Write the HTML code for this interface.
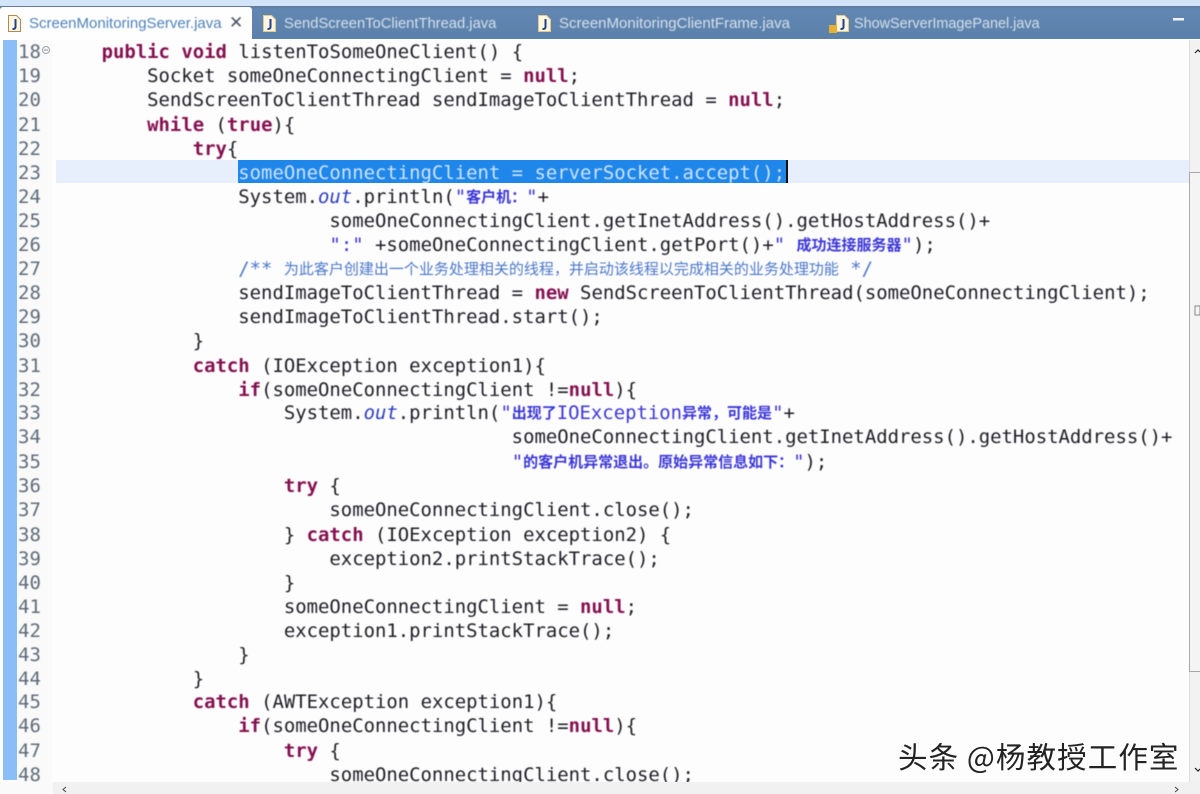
<!DOCTYPE html>
<html><head><meta charset="utf-8">
<style>
html,body{margin:0;padding:0;background:#fefdfe;}
#r{position:relative;width:1200px;height:794px;overflow:hidden;background:#fefdfe;}
#r div{position:absolute;}
.l{left:56px;height:24px;font:18.93px/24px "DejaVu Sans Mono","Liberation Mono","Noto Sans CJK SC",monospace;white-space:pre;color:#1c1c24;filter:blur(.45px);}
.n{left:18px;height:24px;font:19px/24px "DejaVu Sans Mono","Liberation Mono",monospace;color:#5f6b78;filter:blur(.45px);white-space:pre;}
b{color:#85104f;font-weight:bold;}
i{color:#2a3bc0;font-style:italic;}
.s{color:#3a36d8;}
.c{font:bold 15px/24px "Noto Sans CJK SC",sans-serif;color:#3a36d8;display:inline-block;vertical-align:top;}
.m{color:#4a78c8;}
.m .c{font-weight:normal;color:#4a78c8;}
.t{font:15px/20px "Liberation Sans",sans-serif;color:#d5e0ec;top:14px;white-space:pre;filter:blur(.4px);}
</style></head><body><div id="r">
<div style="left:0;top:0;width:1200px;height:6px;background:#d2e5f8"></div>
<div style="left:0;top:6px;width:1200px;height:33px;background:linear-gradient(#64799a 0,#6287b2 3px,#5b80aa 100%)"></div>
<div style="left:0;top:7px;width:252px;height:32px;background:#fefeff;border-radius:3px 3px 0 0"></div>
<div class="t" style="left:29px;color:#4f82b8;">ScreenMonitoringServer.java</div>
<div class="t" style="left:229px;top:13px;color:#4a5560;font-size:17px;">✕</div>
<div class="t" style="left:284px;font-size:14.75px">SendScreenToClientThread.java</div>
<div class="t" style="left:559px;font-size:15px">ScreenMonitoringClientFrame.java</div>
<div class="t" style="left:854px;font-size:14.4px">ShowServerImagePanel.java</div>
<svg style="position:absolute;left:0;top:0" width="1200" height="60">
<g fill="#fdf6e0" stroke="#b08a50" stroke-width="1">
<path d="M8.5 15.5h8l4 4v12h-12z"/><path d="M263.5 15.5h8l4 4v12h-12z" stroke="#e0c890"/><path d="M538.5 15.5h8l4 4v12h-12z" stroke="#e0c890"/><path d="M836.5 15.5h8l4 4v12h-12z" stroke="#e0c890"/></g>
<g fill="none" stroke="#25408a" stroke-width="2"><path d="M15.5 19v8q0 2-3 2"/><path d="M270.5 19v8q0 2-3 2"/><path d="M545.5 19v8q0 2-3 2"/><path d="M843.5 19v8q0 2-3 2"/></g>
<rect x="829" y="25" width="8" height="8" fill="#e8b030"/>
<rect x="1173" y="18" width="11" height="2.5" fill="#f0f4f8"/>
</svg>
<div style="left:3px;top:40px;width:14px;height:740px;background:#8bbdf6"></div>
<div style="left:17px;top:40px;width:35px;height:742px;background:#fafafb"></div>
<div style="left:56px;top:160px;width:1133px;height:23px;background:#e6effb"></div>
<div style="left:238px;top:160px;width:549px;height:23px;background:#1f86ea"></div>
<div style="left:786px;top:160px;width:2px;height:23px;background:#111"></div>
<div style="left:1189px;top:40px;width:11px;height:754px;background:#f2f2f2;border-left:1px solid #dcdcdc;box-sizing:border-box"></div>
<div style="left:1189px;top:172px;width:11px;height:500px;background:#f4f4f4;border:1px solid #a8a8a8;border-right:0;box-sizing:border-box"></div>
<div style="left:0;top:782px;width:1200px;height:12px;background:#f1f1f1"></div>
<div style="left:0;top:782px;width:53px;height:12px;background:#fafafa"></div>
<div class="n" style="top:40px">18</div><div class="n" style="top:64px">19</div><div class="n" style="top:88px">20</div><div class="n" style="top:113px">21</div><div class="n" style="top:137px">22</div><div class="n" style="top:161px">23</div><div class="n" style="top:185px">24</div><div class="n" style="top:209px">25</div><div class="n" style="top:233px">26</div><div class="n" style="top:257px">27</div><div class="n" style="top:281px">28</div><div class="n" style="top:305px">29</div><div class="n" style="top:329px">30</div><div class="n" style="top:354px">31</div><div class="n" style="top:378px">32</div><div class="n" style="top:401px">33</div><div class="n" style="top:425px">34</div><div class="n" style="top:450px">35</div><div class="n" style="top:474px">36</div><div class="n" style="top:498px">37</div><div class="n" style="top:523px">38</div><div class="n" style="top:547px">39</div><div class="n" style="top:571px">40</div><div class="n" style="top:595px">41</div><div class="n" style="top:619px">42</div><div class="n" style="top:643px">43</div><div class="n" style="top:667px">44</div><div class="n" style="top:690px">45</div><div class="n" style="top:714px">46</div><div class="n" style="top:739px">47</div><div class="n" style="top:763px">48</div>
<div class="l" style="top:40px">    <b>public</b> <b>void</b> listenToSomeOneClient() {</div>
<div class="l" style="top:64px">        Socket someOneConnectingClient = <b>null</b>;</div>
<div class="l" style="top:88px">        SendScreenToClientThread sendImageToClientThread = <b>null</b>;</div>
<div class="l" style="top:113px">        <b>while</b> (<b>true</b>){</div>
<div class="l" style="top:137px">            <b>try</b>{</div>
<div class="l" style="top:161px;color:#cfe4fa">                someOneConnectingClient = serverSocket.accept();</div>
<div class="l" style="top:185px">                System.<i>out</i>.println(<span class="s">"<span class="c">客户机：</span>"</span>+</div>
<div class="l" style="top:209px">                        someOneConnectingClient.getInetAddress().getHostAddress()+</div>
<div class="l" style="top:233px">                        <span class="s">":"</span> +someOneConnectingClient.getPort()+<span class="s">" <span class="c">成功连接服务器</span>"</span>);</div>
<div class="l m" style="top:257px">                /** <span class="c">为此客户创建出一个业务处理相关的线程，并启动该线程以完成相关的业务处理功能</span> */</div>
<div class="l" style="top:281px">                sendImageToClientThread = <b>new</b> SendScreenToClientThread(someOneConnectingClient);</div>
<div class="l" style="top:305px">                sendImageToClientThread.start();</div>
<div class="l" style="top:329px">            }</div>
<div class="l" style="top:354px">            <b>catch</b> (IOException exception1){</div>
<div class="l" style="top:378px">                <b>if</b>(someOneConnectingClient !=<b>null</b>){</div>
<div class="l" style="top:401px">                    System.<i>out</i>.println(<span class="s">"<span class="c">出现了</span>IOException<span class="c">异常，可能是</span>"</span>+</div>
<div class="l" style="top:425px">                                        someOneConnectingClient.getInetAddress().getHostAddress()+</div>
<div class="l" style="top:450px">                                        <span class="s">"<span class="c">的客户机异常退出。原始异常信息如下：</span>"</span>);</div>
<div class="l" style="top:474px">                    <b>try</b> {</div>
<div class="l" style="top:498px">                        someOneConnectingClient.close();</div>
<div class="l" style="top:523px">                    } <b>catch</b> (IOException exception2) {</div>
<div class="l" style="top:547px">                        exception2.printStackTrace();</div>
<div class="l" style="top:571px">                    }</div>
<div class="l" style="top:595px">                    someOneConnectingClient = <b>null</b>;</div>
<div class="l" style="top:619px">                    exception1.printStackTrace();</div>
<div class="l" style="top:643px">                }</div>
<div class="l" style="top:667px">            }</div>
<div class="l" style="top:690px">            <b>catch</b> (AWTException exception1){</div>
<div class="l" style="top:714px">                <b>if</b>(someOneConnectingClient !=<b>null</b>){</div>
<div class="l" style="top:739px">                    <b>try</b> {</div>
<div class="l" style="top:763px">                        someOneConnectingClient.close();</div>
<div style="left:0;top:782px;width:1189px;height:12px;background:#f1f1f1"></div>
<div style="left:0;top:782px;width:53px;height:12px;background:#fafafa"></div>
<svg style="position:absolute;left:0;top:0" width="1200" height="794">
<circle cx="46" cy="50" r="3.5" fill="#f4f6f8" stroke="#9aa4b0" stroke-width="1"/><path d="M44 50h4" stroke="#8a94a0" stroke-width="1"/>
<path d="M1195 53l3-3 2 2" fill="none" stroke="#222" stroke-width="1.2"/>
<path d="M1195 768l3 3 2-2" fill="none" stroke="#222" stroke-width="1.2"/>
<path d="M66 787l-3 2.5 3 2.5" fill="none" stroke="#444" stroke-width="1"/>
<path d="M1175 787l3 2.5-3 2.5" fill="none" stroke="#444" stroke-width="1"/>
<rect x="1195" y="306" width="5" height="9" fill="none" stroke="#888" stroke-width="1"/>
</svg>
<div style="left:898px;top:737px;font:29.5px/38px 'Noto Sans CJK SC',sans-serif;color:#222;white-space:pre;letter-spacing:1.1px;filter:blur(.35px)">头条 @杨教授工作室</div>
</div></body></html>
